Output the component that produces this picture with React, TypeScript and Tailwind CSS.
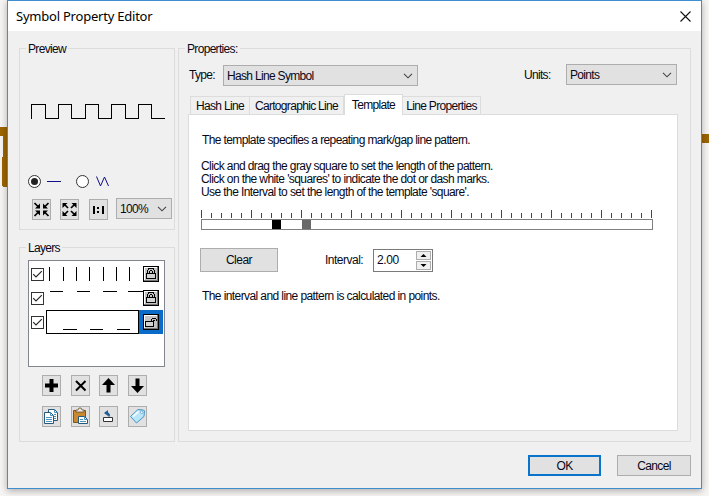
import React from "react";

const wave = "M31.5 118.5V104.5H45.5V118.5H58.5V104.5H71.5V118.5H85.5V104.5H98.5V118.5H111.5V104.5H125.5V118.5H138.5V104.5H151.5V118.5H165";

function Group({ label, className, children }: { label: string; className: string; children: React.ReactNode }) {
  return (
    <section className={`border border-[#dcdcdc] ${className}`}>
      <h2 className="-mt-[7px] ml-1.5 flex h-[14px] w-fit items-center bg-[#f0f0f0] px-0.5">{label}</h2>
      {children}
    </section>
  );
}

function Chevron() {
  return (
    <svg width="10" height="6" viewBox="0 0 10 6" fill="none" stroke="#444" strokeWidth="1.1">
      <path d="M1 .8 5 4.8 9 .8" />
    </svg>
  );
}

function Select({ value, className }: { value: string; className: string }) {
  return (
    <button className={`flex h-[21px] items-center justify-between border border-[#adadad] bg-[#e1e1e1] pr-1 pl-[3px] ${className}`}>
      <span>{value}</span>
      <Chevron />
    </button>
  );
}

function Tool({ children }: { children: React.ReactNode }) {
  return (
    <button className="flex h-[21px] w-[19px] shrink-0 items-center justify-center border border-[#adadad] bg-[#e1e1e1]">
      <svg width="17" height="19" viewBox="0 0 17 19" fill="none">
        {children}
      </svg>
    </button>
  );
}

function Check() {
  return (
    <span className="flex size-[13px] shrink-0 items-center justify-center border border-[#333] bg-white">
      <svg width="11" height="11" viewBox="0 0 11 11" fill="none" stroke="#222" strokeWidth="1.1">
        <path d="M1.2 5.2 4 8 9.8 2.2" />
      </svg>
    </span>
  );
}

function Lock({ open }: { open?: boolean }) {
  return (
    <svg width="16" height="16" viewBox="0 0 16 16" fill="none" shapeRendering="crispEdges">
      <path d="M0 0h16v16H0z" fill="#000" />
      <path d="M1 1h13v13H1z" fill="#fff" />
      <path d="M2 2h12v12H2z" fill="#c3c3c3" />
      <path d="M14 1h1v14H1v-1h13z" fill="#777" />
      {open ? (
        <>
          <path d="M8.5 7V5.5L10 4h2l1.5 1.5V7M10.5 7V6h1" stroke="#000" />
          <path d="M2.500 7.500h8v5h-8z" fill="#d2d2d2" stroke="#000" />
        </>
      ) : (
        <>
          <path d="M4.500 7V4.500L6 2.500h4l1.500 2V7M6.500 7V5.500l1-1h1l1 1V7" stroke="#000" />
          <path d="M3.500 7.500h9v5h-9z" fill="#d2d2d2" stroke="#000" />
        </>
      )}
    </svg>
  );
}

function Radio({ on }: { on?: boolean }) {
  return (
    <span className="flex size-[13px] items-center justify-center rounded-full border border-[#333] bg-white">
      {on && <span className="size-[7px] rounded-full bg-[#222]" />}
    </span>
  );
}

function Preview() {
  return (
    <Group label="Preview" className="h-[182px]">
      <svg className="mt-[45px] ml-[10px]" width="137" height="20" viewBox="30 101 137 20" fill="none" stroke="#000" shapeRendering="crispEdges">
        <path d={wave} />
      </svg>
      <div className="mt-[54px] ml-2 flex h-[13px] items-center">
        <Radio on />
        <svg className="ml-[6px]" width="14" height="13" fill="none" stroke="#10108b" shapeRendering="crispEdges">
          <path d="M0 6.500h14" />
        </svg>
        <span className="ml-[15px]">
          <Radio />
        </span>
        <svg className="ml-[7px]" width="14" height="13" fill="none" stroke="#10108b">
          <path d="M.5 1.500 4.500 11 8.500 2 12.500 11" />
        </svg>
      </div>
      <div className="mt-[10px] ml-3 flex items-end">
        <Tool>
          <path d="M1.500 3l4 4M15.500 3l-4 4M1.500 16l4-4M15.500 16l-4-4" stroke="#000" strokeWidth="1.700" />
          <path d="M7 3.500v5H2zM10 3.500v5h5zM7 15.500v-5H2zM10 15.500v-5h5z" fill="#000" />
        </Tool>
        <span className="w-[9px]" />
        <Tool>
          <path d="M3 4l4 4M14 4l-4 4M3 15l4-4M14 15l-4-4" stroke="#000" strokeWidth="1.700" />
          <path d="M1.500 8V3h5zM15.500 8V3h-5zM1.500 11v5h5zM15.500 11v5h-5z" fill="#000" />
        </Tool>
        <span className="w-[10px]" />
        <Tool>
          <path d="M3 6h2v8H3zM12 6h2v8h-2zM7 7h2v2H7zM7 11h2v2H7z" fill="#000" />
        </Tool>
        <span className="w-2" />
        <Select value="100%" className="mb-px w-[56px]" />
      </div>
    </Group>
  );
}

function Layers() {
  return (
    <Group label="Layers" className="mt-[17px] h-[195px]">
      <div className="mt-[5px] ml-2 h-[107px] w-[137px] border border-[#82878f] bg-white pt-px pl-[2px]">
        <div className="flex h-6 items-center">
          <Check />
          <svg width="99" height="24" viewBox="44 262 99 24" stroke="#000" shapeRendering="crispEdges">
            <path d="M49.500 267v14M63.500 267v14M76.500 267v14M89.500 267v14M103.500 267v14M116.500 267v14M129.500 267v14" />
          </svg>
          <Lock />
        </div>
        <div className="flex h-6 items-center">
          <Check />
          <svg width="99" height="24" viewBox="44 286 99 24" stroke="#000" shapeRendering="crispEdges">
            <path d="M50 291.500h13M77 291.500h13M103 291.500h14M128 291.500h15" />
          </svg>
          <Lock />
        </div>
        <div className="flex h-6 items-center">
          <Check />
          <svg className="ml-[2px] h-6 w-[93px] border border-black" viewBox="47 311 91 22" stroke="#000" shapeRendering="crispEdges">
            <path d="M63 329.500h14M90 329.500h13M117 329.500h13" />
          </svg>
          <span className="flex h-6 w-6 items-center bg-[#0a6cc8] pl-1">
            <Lock open />
          </span>
        </div>
      </div>
      <div className="mt-2 ml-[22px] grid w-fit grid-cols-[29px_28px_29px_19px] gap-y-[10px]">
        <Tool><path d="M6.500 3h4v4.500H15v4h-4.500V16h-4v-4.500H2v-4h4.500z" fill="#000" /></Tool>
        <Tool><path d="M4 5l9.500 9.500M13.500 5L4 14.500" stroke="#000" strokeWidth="2" /></Tool>
        <Tool><path d="M8.500 2 15 9h-4.500v7.500h-4V9H2z" fill="#000" /></Tool>
        <Tool><path d="M8.500 17 15 10h-4.500V2.500h-4V10H2z" fill="#000" /></Tool>
        <Tool>
          <path d="M5.500 2.500h6l3 3v8h-9z" fill="#fff" stroke="#27597b" />
          <path d="M1.500 5.500h6l3 3v8h-9z" fill="#fff" stroke="#27597b" />
          <path d="M7.500 5.500v3h3M11.500 2.500v3h3M3 10.500h6M3 12.500h6M3 14.500h6M11 7.500h2M11 9.500h2M11 11.500h2" stroke="#4a91bd" />
        </Tool>
        <Tool>
          <path d="M1.500 3.500h12v12h-12z" fill="#c88931" stroke="#865514" />
          <path d="M4 5V3h2l1-2h2l1 2h2v2z" fill="#eee" stroke="#644923" strokeWidth=".8" />
          <path d="M6.500 9.500h6l3 3v4h-9z" fill="#fff" stroke="#27597b" />
          <path d="M12.500 9.500v3h3M8 12.500h3M8 14.500h6" stroke="#4a91bd" />
        </Tool>
        <Tool>
          <path d="M9 9.500V7.500L7.500 6H5" stroke="#1f5d94" strokeWidth="1.800" />
          <path d="M8 3v6L4 6z" fill="#1f5d94" />
          <path d="M3.500 10.500h9v4h-9z" fill="#fff" stroke="#333" />
        </Tool>
        <Tool>
          <path d="M1.500 9.500 9 2.500l5.500.500 1 1-.5 5.500-7.500 6.500z" fill="#b9e5fa" stroke="#4a94bf" />
          <path d="M4 9.500 9.500 4.500" stroke="#f0fbff" strokeWidth="2" />
          <circle cx="12.700" cy="5.200" r="1.300" fill="#fff" stroke="#4a94bf" strokeWidth=".7" />
        </Tool>
      </div>
    </Group>
  );
}

const tickPath = Array.from({ length: 46 }, (_, k) => `M${k * 10 + 0.5} ${k % 5 === 0 ? 0 : 3}V8`).join("");

function Template() {
  return (
    <div className="h-[317px] w-[490px] border border-[#dcdcdc] bg-white pl-[11px] leading-[13px]">
      <p className="mt-[19px] ml-[2px] w-fit tracking-[-0.61px] whitespace-nowrap">The template specifies a repeating mark/gap line pattern.</p>
      <div className="mt-[13px] ml-[1px] tracking-[-0.59px] whitespace-nowrap">
        <p className="w-fit">Click and drag the gray square to set the length of the pattern.</p>
        <p className="w-fit">Click on the white 'squares' to indicate the dot or dash marks.</p>
        <p className="w-fit">Use the Interval to set the length of the template 'square'.</p>
      </div>
      <svg className="mt-[11px] ml-px block" width="452" height="8" stroke="#444" shapeRendering="crispEdges">
        <path d={tickPath} />
      </svg>
      <div className="mt-px ml-px flex h-[11px] w-[452px] border border-[#808080] pl-[70px]">
        <span className="size-[9px] bg-black" />
        <span className="ml-[21px] size-[9px] bg-[#696969]" />
      </div>
      <div className="mt-[18px] flex items-center">
        <button className="h-6 w-[78px] border border-[#adadad] bg-[#e1e1e1] tracking-[-0.5px]">Clear</button>
        <span className="ml-[47px] w-[48px] tracking-[-0.5px]">Interval:</span>
        <div className="mt-px flex h-[23px] w-[60px] justify-between border border-[#7a7a7a] bg-white p-px pl-[3px]">
          <span className="mt-[3px] tracking-[-0.4px]">2.00</span>
          <span className="flex flex-col gap-px">
            {["M7 3 10 6H4z", "M4 3h6L7 6z"].map((d) => (
              <svg key={d} className="h-[9px] w-[15px] border border-[#adadad] bg-[#f0f0f0]" viewBox="0.5 1 13 7">
                <path d={d} />
              </svg>
            ))}
          </span>
        </div>
      </div>
      <p className="mt-[18px] ml-[2px] w-fit tracking-[-0.59px] whitespace-nowrap">The interval and line pattern is calculated in points.</p>
    </div>
  );
}

const tab = "flex h-[18px] items-center justify-center border border-b-0 border-[#dcdcdc] whitespace-nowrap";

function Properties() {
  return (
    <Group label="Properties:" className="ml-[3px] h-[394px] w-[513px]">
      <div className="mt-[8px] ml-[10px] flex h-[22px]">
        <span className="flex w-[34px] items-center">Type:</span>
        <Select value="Hash Line Symbol" className="mt-px w-[195px]" />
        <span className="ml-[106px] flex w-[42px] items-center">Units:</span>
        <Select value="Points" className="w-[111px]" />
      </div>
      <div className="mt-[8px] ml-[11px] flex h-[20px] items-end">
        <span className={`${tab} w-[60px] pt-px`}>Hash Line</span>
        <span className={`${tab} w-[94px] border-l-0 pt-px`}>Cartographic Line</span>
        <span className={`${tab} relative z-10 -mb-px h-[21px] w-[59px] bg-white pb-px`}>Template</span>
        <span className={`${tab} w-[78px] border-l-0 pt-px`}>Line Properties</span>
      </div>
      <div className="ml-[9px]">
        <Template />
      </div>
    </Group>
  );
}

export default function App() {
  return (
    <div className="relative h-[496px] w-[709px] overflow-hidden bg-[#f7f5f4] font-['Liberation_Sans',Arial,sans-serif] text-[12px] leading-[14px] tracking-[-0.68px] text-[#080818]">
      <svg className="absolute inset-0" width="709" height="496" fill="#9c6500">
        <path d="M0 127h8v60H3v-1H2v-29h1v-21H0zM701 134h8v9h-8z" />
      </svg>
      <main className="relative ml-[7px] h-[489px] w-[695px] border border-[#3f8fd0] bg-[#f0f0f0] shadow-[0_2px_7px_rgba(0,0,0,0.3)]">
        <header className="flex h-[30px] items-center justify-between bg-white pr-[10px] pl-2">
          <h1 className="font-['Noto_Sans','Open_Sans',sans-serif] text-[13px] tracking-[-0.22px] text-black">Symbol Property Editor</h1>
          <svg width="11" height="11" stroke="#111" strokeWidth="1.100">
            <path d="M.5.5l10 10M10.500.5l-10 10" />
          </svg>
        </header>
        <div className="flex pt-[17px] pl-[11px]">
          <div className="w-[156px]">
            <Preview />
            <Layers />
          </div>
          <Properties />
        </div>
        <footer className="mt-[13px] mr-[10px] flex justify-end gap-4">
          <button className="h-[21px] w-[73px] border-2 border-[#0a73cc] bg-[#e1e1e1]">OK</button>
          <button className="h-[21px] w-[74px] border border-[#adadad] bg-[#e1e1e1]">Cancel</button>
        </footer>
      </main>
    </div>
  );
}
